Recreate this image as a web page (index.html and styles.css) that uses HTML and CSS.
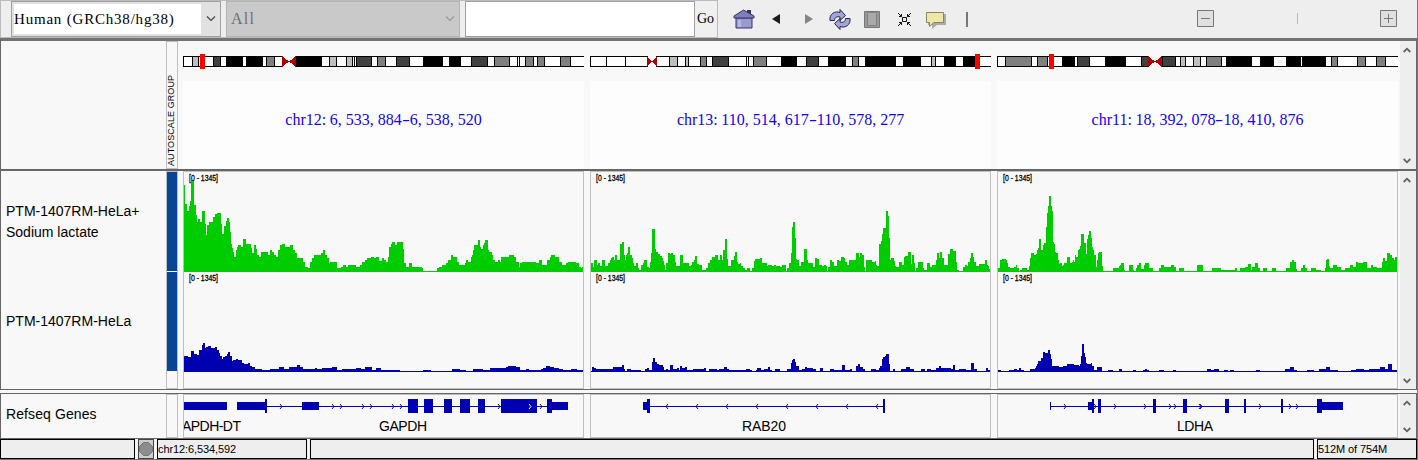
FILE: index.html
```
<!DOCTYPE html>
<html lang="en">
<head>
    <meta charset="UTF-8">
    <meta name="viewport" content="width=device-width, initial-scale=1.0">
    <title>IGV</title>
    <link rel="stylesheet" href="styles.css">
</head>
<body>
    <div class="toolbar">
        <div class="location-bar">
            <div class="combo genome">
                <span class="combo-value">Human (GRCh38/hg38)</span>
                <svg class="chevron" width="10" height="6" viewBox="0 0 10 6"><path d="M1 .5l4 4 4-4"/></svg>
            </div>
            <div class="combo chromosome">
                <span class="combo-value">All</span>
                <svg class="chevron" width="10" height="6" viewBox="0 0 10 6"><path d="M1 .5l4 4 4-4"/></svg>
            </div>
            <input class="locus" type="text">
            <button class="go-btn">Go</button>
        </div>

        <div class="tools">
            <!-- home, back, forward -->
            <svg width="22" height="20" viewBox="0 0 22 20">
                <path d="M14 1h4v5h-4z" fill="#34346a"/>
                <path d="M3 9h16v10H3z" fill="#9a9ad0" stroke="#34346a"/>
                <path d="M10.500 1L1 7v2h20V7z" fill="#8080b8" stroke="#34346a"/>
                <path d="M5 11h3v7H5z" fill="#b8b8e4"/>
            </svg>
            <svg class="t-back" width="9" height="10" viewBox="0 0 9 10"><path d="M0 5l8-5v10z" fill="#1c1c1c"/></svg>
            <svg class="t-forward" width="9" height="10" viewBox="0 0 9 10"><path d="M9 5L1 0v10z" fill="#858585"/></svg>
            <svg class="t-refresh" width="22" height="21" viewBox="0 0 22 21">
                <path d="M1 11.500C0 5 6 1.500 11 3.500V.5l5.500 6-5.500 5V8C8 7 5.500 8.500 5.500 11.500z" fill="#a4a4dc" stroke="#25254f"/>
                <path d="M21 9.500c1 6.500-5 10-10 8v3l-5.500-6 5.500-5V13c3 1 5.500-.5 5.500-3.500z" fill="#a4a4dc" stroke="#25254f"/>
            </svg>
            <svg class="t-region" width="16" height="17" viewBox="0 0 16 17">
                <path d="M.5.5h15v16H.5z" fill="#999" stroke="#777"/>
                <path d="M3.500 1.500h9v13h-9z" fill="#aaa" stroke="#808080"/>
            </svg>
            <svg class="t-fit" width="15" height="15" viewBox="0 0 15 15">
                <path d="M5.500 5.500h4v4h-4zM1 1l3.500 3.500M14 1l-3.500 3.500M1 14l3.500-3.500M14 14l-3.500-3.500M2 4.500h2.500V2M13 4.500h-2.500V2M2 10.500h2.500V13M13 10.500h-2.500V13"/>
            </svg>
            <svg class="t-popup" width="20" height="17" viewBox="0 0 20 17">
                <path d="M2 2h18v11h-9l-5 4v-4H2z" fill="#aaa"/>
                <path d="M.5.5h17v10H8l-4.500 4v-4h-3z" fill="#efe8a5" stroke="#85856a"/>
            </svg>
            <span class="t-bar"></span>
        </div>

        <div class="zoom">
            <svg width="17" height="17" viewBox="0 0 17 17"><path d="M.5.5h16v16H.5z"/><path d="M4 8.500h9"/></svg>
            <span class="zoom-mark"></span>
            <svg width="17" height="17" viewBox="0 0 17 17"><path d="M.5.5h16v16H.5z"/><path d="M4 8.500h9M8.500 4v9"/></svg>
        </div>
    </div>

    <div class="row header-row">
        <div class="name"></div>
        <div class="attr"><span>AUTOSCALE GROUP</span></div>
        <div class="panels">
            <div class="ideo-panel">
                <svg class="ideogram" width="401" height="15" viewBox="0 -2 401 15">
                    <path class="neg" d="M0 0H99V11H0zM113 0H402V11H113z"/>
                    <path class="neg-line" d="M99.500.5H.5v10H99.500M113 .5H401M113 10.500H401M334.500 0v11M336.500 0v11"/>
                    <path class="g25" d="M9.500.5h6v10h-6zM146.500.5h7v10h-7zM163.500.5h6v10h-6z"/>
                    <path class="g50" d="M83.500.5h8v10h-8zM194.500.5h8v10h-8zM311.500.5h15v10h-15zM342.500.5h8v10h-8zM354.500.5h7v10h-7zM377.500.5h10v10h-10z"/>
                    <path class="g75" d="M30.500.5h7v10h-7zM173.500.5h15v10h-15zM213.500.5h13v10h-13zM288.500.5h16v10h-16z"/>
                    <path class="g100" d="M43 0h17v11H43zM63 0h17v11H63zM113 0h26v11h-26zM240 0h20v11h-20zM266 0h12v11h-12zM171 0h1v11h-1z"/>
                    <path class="acen" d="M99 0l7 5.500-7 5.500zM113 0l-7 5.500 7 5.500z"/>
                    <path class="view" d="M17-2h5v15h-5z"/>
                </svg>
                <div class="ruler">chr12<i>:</i>6<i>,</i>533<i>,</i>884<i class="dash">-</i>6<i>,</i>538<i>,</i>520</div>
            </div>
            <div class="ideo-panel">
                <svg class="ideogram" width="401" height="15" viewBox="0 -2 401 15">
                    <path class="neg" d="M0 0H57V11H0zM67 0H402V11H67z"/>
                    <path class="neg-line" d="M57.500.5H.5v10H57.500M401 .5H66.500v10H401M16.500 0v11M35.500 0v11M156.500 0v11M158.500 0v11"/>
                    <path class="g25" d="M79.500.5h8v10h-8zM95.500.5h3v10h-3zM341.500.5h4v10h-4z"/>
                    <path class="g50" d="M110.500.5h6v10h-6zM163.500.5h13v10h-13zM262.500.5h6v10h-6z"/>
                    <path class="g75" d="M122.500.5h16v10h-16zM216.500.5h12v10h-12z"/>
                    <path class="g100" d="M191 0h16v11h-16zM238 0h18v11h-18zM275 0h31v11h-31zM313 0h18v11h-18zM354 0h12v11h-12zM373 0h12v11h-12z"/>
                    <path class="acen" d="M57 0l5 5.500-5 5.500zM67 0l-5 5.500 5 5.500z"/>
                    <path class="view" d="M385-2h5v15h-5z"/>
                </svg>
                <div class="ruler">chr13<i>:</i>110<i>,</i>514<i>,</i>617<i class="dash">-</i>110<i>,</i>578<i>,</i>277</div>
            </div>
            <div class="ideo-panel">
                <svg class="ideogram" width="401" height="15" viewBox="0 -2 401 15">
                    <path class="neg" d="M0 0H152V11H0zM165 0H402V11H165z"/>
                    <path class="neg-line" d="M152 .5H.5v10H152M165 .5H401M165 10.500H401"/>
                    <path class="g25" d="M183.500.5h5v10h-5zM196.500.5h7v10h-7z"/>
                    <path class="g50" d="M8.500.5h26v10h-26zM40.500.5h10v10h-10zM209.500.5h15v10h-15zM334.500.5h6v10h-6zM360.500.5h8v10h-8zM379.500.5h9v10h-9z"/>
                    <path class="g75" d="M80.500.5h12v10h-12zM144.500.5h7v10h-7zM165.500.5h13v10h-13z"/>
                    <path class="g100" d="M65 0h13v11H65zM108 0h21v11h-21zM229 0h26v11h-26zM263 0h14v11h-14zM289 0h15v11h-15zM305 0h24v11h-24z"/>
                    <path class="acen" d="M151 0l7 5.500-7 5.500zM165 0l-7 5.500 7 5.500z"/>
                    <path class="view" d="M52-2h5v15h-5z"/>
                </svg>
                <div class="ruler">chr11<i>:</i>18<i>,</i>392<i>,</i>078<i class="dash">-</i>18<i>,</i>410<i>,</i>876</div>
            </div>
        </div>
        <div class="scrollbar">
            <svg width="8" height="6" viewBox="0 0 8 6"><path d="M.7 5L4 1.700 7.300 5"/></svg>
            <svg width="8" height="6" viewBox="0 0 8 6"><path d="M.7 1L4 4.300 7.300 1"/></svg>
        </div>
    </div>

    <div class="row data-row">
        <div class="name">
            <div class="track-name">PTM-1407RM-HeLa+<br>Sodium lactate</div>
            <div class="track-name">PTM-1407RM-HeLa</div>
        </div>
        <div class="attr"><i></i><i></i></div>
        <div class="panels">
            <svg class="panel" width="399" height="216" viewBox="0 0 399 216">
                <path class="lactate" d="M0 100V13H1V32H3V39H5V34H6V29H7V8H10V33H12V43H13V50H14V47H16V50H18V39H21V52H22V63H23V53H25V50H29V45H31V42H33V41H37V52H38V62H40V54H42V49H43V46H45V50H46V60H47V72H48V76H49V80H50V85H52V78H53V75H54V73H57V75H59V67H62V72H67V76H68V81H70V73H72V77H73V83H75V85H77V80H84V83H86V78H88V80H90V83H92V85H94V78H96V73H98V72H101V75H106V73H109V78H111V81H113V86H119V90H121V95H124V96H126V90H128V86H130V83H137V81H139V78H141V83H143V86H145V91H146V90H153V96H157V95H159V93H162V95H164V93H172V95H176V93H178V90H181V88H183V86H187V85H190V86H192V85H195V89H198V86H200V88H202V90H204V85H205V75H207V72H208V70H211V73H213V70H219V77H220V91H222V95H225V91H228V95H238V96H239V99H253V96H255V95H258V93H262V91H264V88H267V83H269V85H273V90H275V93H281V91H282V88H284V90H287V85H288V83H289V78H290V73H294V68H296V75H297V77H299V73H300V71H301V68H304V78H305V80H308V83H309V88H311V90H314V88H316V90H317V85H325V83H330V85H332V90H335V95H336V91H338V90H352V91H355V88H358V93H363V88H366V85H367V83H371V85H375V90H378V93H382V91H384V90H392V91H395V95H397V96H398V95H399V100Z"/>
                <path class="control" d="M0 200V184H4V185H7V179H10V182H13V183H15V178H18V173H19V171H21V176H22V175H24V174H27V176H31V175H33V178H35V181H36V184H38V187H39V185H41V184H43V182H44V180H46V184H48V189H49V188H52V187H54V188H58V191H60V192H64V191H66V194H68V195H71V197H78V198H86V197H95V195H100V197H105V195H113V193H116V195H119V197H131V196H133V197H138V196H148V195H153V198H158V197H172V196H177V197H181V195H188V198H192V196H197V198H216V199H239V198H247V199H268V197H276V198H282V199H289V197H299V198H306V196H322V195H324V194H332V195H336V198H342V197H345V198H357V197H359V196H362V194H366V195H370V196H375V197H379V198H387V197H393V198H399V200Z"/>
                <text class="range" x="5" y="9" textLength="29" lengthAdjust="spacingAndGlyphs">[0 - 1345]</text>
                <text class="range" x="5" y="109" textLength="29" lengthAdjust="spacingAndGlyphs">[0 - 1345]</text>
            </svg>
            <svg class="panel" width="399" height="216" viewBox="0 0 399 216">
                <path class="lactate" d="M0 100V91H2V95H3V88H6V93H7V91H9V94H11V88H14V94H17V91H19V88H20V86H21V85H23V88H24V83H26V88H29V72H31V70H33V83H34V88H35V83H36V81H37V75H39V83H41V86H42V91H43V94H45V91H47V96H48V98H50V93H52V91H53V88H56V95H58V96H59V90H60V81H61V57H64V77H65V80H67V82H69V84H71V86H72V89H73V93H74V98H75V91H77V81H79V82H80V81H82V83H84V90H85V94H89V83H92V91H98V94H100V93H101V90H103V88H104V84H106V92H108V93H111V98H115V96H117V91H119V88H121V85H124V83H127V88H129V83H131V88H132V78H134V67H136V87H137V94H140V88H143V84H144V80H146V90H147V92H149V91H150V94H152V96H154V98H156V96H159V99H161V96H163V89H164V87H169V86H171V91H176V94H177V93H181V94H183V93H185V94H189V95H191V93H195V99H196V96H198V91H200V81H201V55H202V50H204V66H205V87H206V88H208V94H210V90H213V77H216V88H217V91H222V95H224V86H226V87H228V93H231V94H233V93H235V94H236V99H237V95H239V88H241V90H243V94H246V88H248V89H250V85H253V86H254V90H256V93H258V88H265V81H268V85H269V81H271V83H273V95H274V99H275V88H281V90H284V89H285V93H286V94H288V72H290V69H291V62H292V56H295V39H297V44H298V66H299V88H300V86H303V89H304V94H305V95H308V90H311V93H313V85H314V84H317V80H320V92H321V83H323V91H324V99H325V96H327V90H332V96H333V98H336V91H339V95H341V93H345V88H346V81H348V86H349V80H351V86H353V93H357V82H359V77H362V79H365V90H366V98H368V99H372V95H374V93H376V94H377V90H379V86H380V81H382V85H383V90H385V94H388V92H394V88H396V93H397V94H398V97H399V100Z"/>
                <path class="control" d="M0 200V199H1V195H3V196H5V197H22V195H31V193H33V197H34V199H36V197H40V198H50V199H54V197H56V196H58V198H61V190H62V186H64V190H66V192H68V193H72V195H73V198H75V197H77V198H79V193H82V197H86V196H88V198H89V194H91V196H94V195H96V198H102V197H113V196H115V199H118V197H126V198H128V197H133V195H136V197H138V198H155V197H159V198H161V199H165V198H166V196H170V198H173V197H177V195H179V198H181V199H184V197H189V199H196V197H200V191H201V188H202V187H204V190H205V194H208V198H211V197H214V195H216V196H222V197H225V199H229V196H232V199H239V197H243V198H251V193H254V198H259V197H261V199H265V194H267V192H269V195H272V197H274V199H280V197H285V198H288V196H289V194H291V187H292V185H294V184H295V182H298V192H299V199H302V197H304V199H310V197H315V195H319V197H323V199H330V197H334V199H336V197H340V198H345V196H348V194H350V196H360V197H362V193H364V198H368V197H375V198H380V191H383V197H386V199H395V196H397V198H399V200Z"/>
                <text class="range" x="5" y="9" textLength="29" lengthAdjust="spacingAndGlyphs">[0 - 1345]</text>
                <text class="range" x="5" y="109" textLength="29" lengthAdjust="spacingAndGlyphs">[0 - 1345]</text>
            </svg>
            <svg class="panel" width="399" height="216" viewBox="0 0 399 216">
                <path class="lactate" d="M0 100V96H2V88H4V87H8V88H9V91H10V95H12V96H16V95H18V93H19V96H21V99H22V98H24V96H29V98H31V94H32V86H33V81H36V83H38V82H39V78H40V76H41V67H43V78H45V73H46V71H48V55H49V41H50V34H51V24H53V34H54V39H55V70H56V72H57V80H58V81H60V88H61V92H62V91H64V94H65V93H66V91H69V85H72V91H74V90H75V88H76V90H77V83H78V85H80V78H81V77H82V74H83V62H86V71H88V82H89V67H90V63H91V59H93V66H94V75H95V78H96V83H98V95H99V88H100V81H101V80H104V94H105V99H115V96H121V94H122V93H123V91H126V98H127V99H131V93H135V98H136V99H138V96H139V93H141V91H143V97H146V93H147V91H151V96H155V99H161V96H163V93H166V95H173V93H176V95H178V99H181V96H186V99H199V93H205V99H214V96H223V98H237V96H239V99H242V96H247V95H250V92H253V98H254V95H257V91H260V96H262V99H265V96H269V99H274V96H278V99H288V96H292V90H294V88H296V90H298V97H299V99H303V96H305V93H307V96H309V99H313V96H318V98H323V99H327V96H328V88H329V87H331V94H332V96H335V93H339V95H343V98H347V96H352V93H355V95H358V90H360V91H365V90H369V96H373V93H375V95H379V96H384V90H385V86H387V89H389V81H392V83H394V86H396V88H397V85H399V100Z"/>
                <path class="control" d="M0 200V198H3V199H11V198H16V197H19V198H21V196H23V198H26V199H32V197H37V196H38V194H39V192H40V189H43V186H45V180H47V181H50V178H52V182H53V187H54V194H61V195H65V194H69V192H76V193H81V194H82V192H83V184H84V172H86V181H87V185H88V191H89V192H93V191H94V194H96V198H99V195H104V199H110V198H115V199H121V197H124V199H135V198H138V199H145V198H147V197H149V198H151V199H161V198H166V199H175V198H178V199H209V197H213V198H216V197H221V199H226V198H230V199H232V198H236V199H258V198H262V199H287V197H292V195H296V198H299V199H309V198H316V199H321V197H328V195H332V198H340V199H353V198H358V197H366V198H371V197H382V195H387V197H390V192H394V198H399V200Z"/>
                <text class="range" x="5" y="9" textLength="29" lengthAdjust="spacingAndGlyphs">[0 - 1345]</text>
                <text class="range" x="5" y="109" textLength="29" lengthAdjust="spacingAndGlyphs">[0 - 1345]</text>
            </svg>
        </div>
        <div class="scrollbar">
            <svg width="8" height="6" viewBox="0 0 8 6"><path d="M.7 5L4 1.700 7.300 5"/></svg>
            <svg width="8" height="6" viewBox="0 0 8 6"><path d="M.7 1L4 4.300 7.300 1"/></svg>
        </div>
    </div>

    <div class="row gene-row">
        <div class="name"><div class="track-name">Refseq Genes</div></div>
        <div class="attr"></div>
        <div class="panels">
            <svg class="panel" width="399" height="42" viewBox="0 0 399 42">
                <path class="exon" d="M0 7h43v8H0zM53 7h28v8H53zM81 4h2v14h-2zM83 11h280v1H83zM118 7h17v8h-17zM224 4h10v14h-10zM240 4h9v14h-9zM260 4h8v14h-8zM276 4h10v14h-10zM294 4h7v14h-7zM317 4h36v14h-36zM363 4h5v14h-5zM368 7h16v8h-16z"/>
                <path class="strand" d="M96 9l2 2.500-2 2.500M148 9l2 2.500-2 2.500M156 9l2 2.500-2 2.500M178 9l2 2.500-2 2.500M186 9l2 2.500-2 2.500M208 9l2 2.500-2 2.500M216 9l2 2.500-2 2.500M314 9l2 2.500-2 2.500M356 9l2 2.500-2 2.500"/>
                <path class="strand inner" d="M345 9l2 2.500-2 2.500"/>
                <text class="gene" x="-2" y="36" textLength="59">APDH-DT</text>
                <text class="gene" x="195" y="36" textLength="48">GAPDH</text>
            </svg>
            <svg class="panel" width="399" height="42" viewBox="0 0 399 42">
                <path class="exon" d="M52 7h4v8h-4zM56 4h3v14h-3zM59 11h233v1H59zM292 4h2v14h-2z"/>
                <path class="strand" d="M77 9l-2 2.500 2 2.500M107 9l-2 2.500 2 2.500M137 9l-2 2.500 2 2.500M167 9l-2 2.500 2 2.500M197 9l-2 2.500 2 2.500M227 9l-2 2.500 2 2.500M257 9l-2 2.500 2 2.500M287 9l-2 2.500 2 2.500"/>
                <text class="gene" x="151" y="36" textLength="44">RAB20</text>
            </svg>
            <svg class="panel" width="399" height="42" viewBox="0 0 399 42">
                <path class="exon" d="M52 7h1v8h-1zM53 11h266v1H53zM90 7h4v8h-4zM94 4h2v14h-2zM100 4h3v14h-3zM155 4h3v14h-3zM185 4h4v14h-4zM227 4h4v14h-4zM246 4h2v14h-2zM283 4h2v14h-2zM319 4h5v14h-5zM324 7h21v8h-21z"/>
                <path class="strand" d="M66 9l2 2.500-2 2.500M96 9l2 2.500-2 2.500M116 9l2 2.500-2 2.500M146 9l2 2.500-2 2.500M171 9l2 2.500-2 2.500M176 9l2 2.500-2 2.500M201 9l2 2.500-2 2.500M202 9l2 2.500-2 2.500M261 9l2 2.500-2 2.500M291 9l2 2.500-2 2.500M298 9l2 2.500-2 2.500"/>
                <text class="gene" x="179" y="36" textLength="36">LDHA</text>
            </svg>
        </div>
        <div class="scrollbar">
            <svg width="8" height="6" viewBox="0 0 8 6"><path d="M.7 5L4 1.700 7.300 5"/></svg>
            <svg width="8" height="6" viewBox="0 0 8 6"><path d="M.7 1L4 4.300 7.300 1"/></svg>
        </div>
    </div>

    <div class="status">
        <div class="cell message"></div>
        <div class="cell stop">
            <svg width="14" height="14" viewBox="0 0 14 14"><path d="M4.500.5h5l4 4v5l-4 4h-5l-4-4v-5z" fill="#8c8c8c" stroke="#777"/></svg>
        </div>
        <div class="cell position">chr12:6,534,592</div>
        <div class="cell fill"></div>
        <div class="cell memory">512M of 754M</div>
    </div>
</body>
</html>
```
FILE: styles.css
```
:root {
    --line: #666666;
    --panel-border: #bfbfbf;
    --panel-bg: #f8f8f8;
    --chrome-bg: #eeeeee;
    --green: #00cd00;
    --blue: #0000b2;
}

* {
    box-sizing: border-box;
}

body {
    margin: 0;
    width: 1418px;
    height: 460px;
    overflow: hidden;
    display: flex;
    flex-direction: column;
    border-right: 1px solid #777;
    background: var(--panel-bg);
    color: #000;
    font-family: "Liberation Sans", Arial, sans-serif;
}

svg {
    display: block;
    flex: none;
}

/* toolbar */
.toolbar {
    height: 38px;
    display: flex;
    align-items: flex-start;
    background: var(--chrome-bg);
    font-family: "Liberation Serif", serif;
    font-size: 16px;
}

.location-bar {
    width: 718px;
    height: 38px;
    padding: 0 0 0 10px;
    display: flex;
    align-items: center;
    border: 1px solid #bbb;
    flex: none;
}

.combo {
    height: 36px;
    display: flex;
    align-items: center;
    justify-content: space-between;
    border: 1px solid #a0a0a0;
    padding: 2px 4px 2px 2px;
    margin-right: 5px;
}

.genome {
    width: 210px;
    background: #e1e1e1;
}

.genome .combo-value {
    width: 187px;
    height: 30px;
    line-height: 30px;
    font-size: 15px;
    letter-spacing: 0.8px;
    background: #fff;
}

.chromosome {
    width: 234px;
    background: #c9c9c9;
    border-color: #b4b4b4;
    color: #707070;
}

.chromosome .combo-value {
    padding-left: 2px;
    letter-spacing: 1.2px;
}

.chevron path {
    fill: none;
    stroke: #444;
    stroke-width: 1.2;
}

.chromosome .chevron path {
    stroke: #999;
}

.locus {
    width: 230px;
    height: 36px;
    border: 1px solid #a0a0a0;
    background: #fff;
}

.go-btn {
    width: 21px;
    height: 36px;
    padding: 0 0 0 2px;
    border: none;
    background: #f0f0f0;
    text-align: left;
    font-family: inherit;
    font-size: 14px;
}

.tools {
    flex: 1;
    height: 38px;
    padding-left: 15px;
    display: flex;
    align-items: center;
}

.t-back {
    margin-left: 17px;
}

.t-forward {
    margin-left: 23px;
}

.t-refresh {
    margin-left: 16px;
}

.t-region {
    margin-left: 13px;
}

.t-fit {
    margin-left: 17px;
}

.t-fit path {
    fill: none;
    stroke: #111;
}

.t-popup {
    margin-left: 14px;
    margin-top: 3px;
}

.t-bar {
    width: 2px;
    height: 15px;
    margin-left: 20px;
    background: #777;
}

.zoom {
    width: 220px;
    height: 37px;
    padding-right: 20px;
    display: flex;
    align-items: center;
    justify-content: space-between;
}

.zoom path {
    fill: none;
    stroke: #777;
}

.zoom path:first-child {
    fill: #e0e0e0;
}

.zoom-mark {
    width: 1px;
    height: 11px;
    background: #bbb;
}

/* rows */
.row {
    width: 1417px;
    display: flex;
    border-left: 1px solid var(--line);
    border-right: 1px solid var(--line);
    background: var(--panel-bg);
}

.header-row {
    height: 131px;
    border-top: 3px solid #737373;
}

.data-row {
    height: 221px;
    border-top: 2px solid var(--line);
    border-bottom: 1px solid var(--line);
}

.gene-row {
    height: 46px;
    margin-top: 3px;
    border-top: 1px solid var(--line);
    border-bottom: 1px solid var(--line);
}

.name {
    width: 165px;
    padding-left: 5px;
    font-size: 14px;
    line-height: 21px;
    white-space: nowrap;
    flex: none;
}

.data-row .track-name {
    height: 100px;
    display: flex;
    align-items: center;
}

.data-row .track-name:first-child {
    padding-top: 2px;
}

.gene-row .track-name {
    line-height: 41px;
    letter-spacing: 0.1px;
}

.attr {
    width: 12px;
    border: 1px solid var(--panel-border);
    margin-right: 5px;
    display: flex;
    flex-direction: column;
    gap: 1px;
    flex: none;
}

.attr i {
    height: 99px;
    background: #0a4595;
}

.attr span {
    writing-mode: vertical-rl;
    transform: rotate(180deg);
    width: 9px;
    height: 124px;
    font-size: 9px;
    line-height: 9px;
    letter-spacing: 0.08px;
    white-space: nowrap;
}

.panels {
    display: flex;
    gap: 6px;
    margin-right: 2px;
}

.panel {
    box-sizing: content-box;
    border: 1px solid var(--panel-border);
    overflow: hidden;
}

.ideo-panel {
    width: 401px;
    display: flex;
    flex-direction: column;
    padding-top: 13px;
}

.ideogram path {
    shape-rendering: crispEdges;
    stroke: #000;
}

.ideogram .neg,
.ideogram .g100,
.ideogram .acen,
.ideogram .view {
    stroke: none;
}

.ideogram .neg {
    fill: #fff;
}

.ideogram .neg-line {
    fill: none;
}

.g25 {
    fill: #bfbfbf;
}

.g50 {
    fill: #808080;
}

.g75 {
    fill: #404040;
}

.g100 {
    fill: #000;
}

.acen {
    fill: #b00000;
}

.view {
    fill: #f00;
}

.ruler {
    flex: 1;
    margin-top: 12px;
    line-height: 77px;
    background: #fdfdfd;
    text-align: center;
    color: #1400ff;
    font-family: "Liberation Serif", serif;
    font-size: 16px;
}

/* punctuation takes a full digit cell */
.ruler i {
    display: inline-block;
    width: 8px;
    font-style: normal;
    text-align: left;
}

.ruler .dash {
    transform: scaleX(1.5);
    transform-origin: left;
}

.lactate {
    fill: var(--green);
    shape-rendering: crispEdges;
}

.control,
.exon {
    fill: var(--blue);
    shape-rendering: crispEdges;
}

.strand {
    fill: none;
    stroke: var(--blue);
}

.strand.inner {
    stroke: #fff;
}

.range {
    font-size: 8.5px;
    stroke: #000;
    stroke-width: 0.3px;
}

.gene {
    font-size: 14px;
}

.scrollbar {
    width: 16px;
    padding: 6px 0 5px 3px;
    display: flex;
    flex-direction: column;
    justify-content: space-between;
    background: var(--chrome-bg);
}

.scrollbar path {
    fill: none;
    stroke: #606060;
    stroke-width: 1.8;
}

/* status bar */
.status {
    height: 21px;
    display: flex;
    gap: 3px;
    padding-bottom: 1px;
    background: #f4f4f4;
    border-bottom: 1px solid #777;
}

.cell {
    height: 20px;
    border: 1px solid #000;
    background: var(--chrome-bg);
    font-size: 11px;
    letter-spacing: -0.1px;
    line-height: 19px;
    white-space: nowrap;
}

.message {
    width: 135px;
}

.stop {
    width: 16px;
    border-color: #444;
    background: #ccc;
    display: flex;
    align-items: center;
    justify-content: center;
}

.position {
    width: 150px;
}

.fill {
    width: 1004px;
}

.memory {
    width: 100px;
}
```
